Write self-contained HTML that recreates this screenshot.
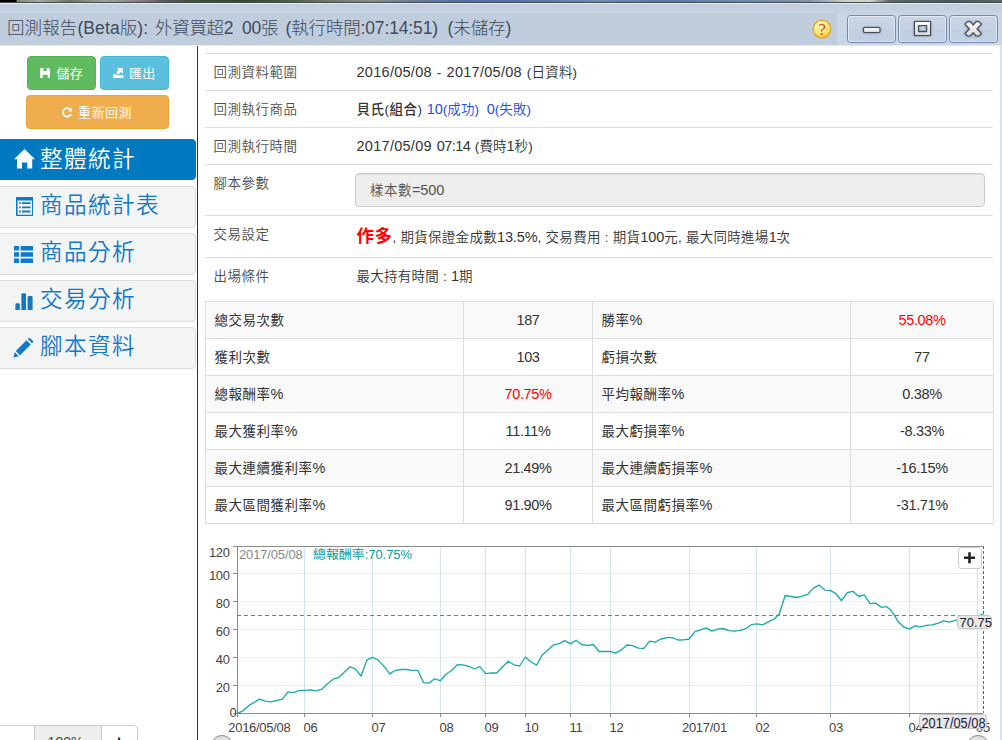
<!DOCTYPE html>
<html lang="zh-Hant">
<head>
<meta charset="utf-8">
<title>回測報告</title>
<style>
*{box-sizing:border-box}
html,body{margin:0;padding:0}
body{width:1002px;height:740px;overflow:hidden;background:#fff;position:relative;
 font-family:"Liberation Sans","Noto Sans CJK TC",sans-serif;font-size:14px;line-height:20px;color:#333}
.abs{position:absolute}
/* window chrome */
#deskimg{left:0;top:0;width:1002px;height:3px;border-bottom:1px solid #474a4c;background:
 linear-gradient(90deg,#000 0,#000 16px,#7f8a7c 17px,#a3aaa0 40px,#6c7868 70px,#9aa29a 105px,#8a7d8a 140px,#5a5560 165px,#3f5438 190px,#33482f 240px,#4a5d44 290px,#6d7a6c 330px,#858d86 370px,#6a7f9c 410px,#4f70a6 470px,#5878aa 540px,#6f8db4 600px,#587aa6 660px,#6a89ad 740px,#7d94ae 810px,#cfcfc6 845px,#d6d6cc 870px,#5a676c 890px,#48585e 950px,#56666a 1002px)}
#titlebar{left:0;top:3px;width:1002px;height:43px;background:#bfcddc;border-top:1px solid #e6edf6;border-bottom:1px solid #e2eaf3}
#titlebar .lite{left:0;top:0;width:1002px;height:9px;background:linear-gradient(#c0cedd,#c6d3e1)}
#titlebar .rlite{left:837px;top:9px;width:165px;height:32px;background:#c9d6e5}
#ttext{top:17px;height:26px;line-height:26px;font-size:17.5px;color:#3f4b5c;white-space:nowrap;font-weight:300}
#ttext span{position:absolute;top:0;white-space:nowrap}
.wbtn{top:15px;width:48px;height:28px;border:1px solid #7c8eb0;border-radius:3px;
 background:linear-gradient(#cfdbe9,#c3d1e2 45%,#bccbde 50%,#c7d4e4);box-shadow:inset 0 0 0 1px rgba(255,255,255,.45)}
#rstrip{left:1000px;top:46px;width:2px;height:694px;background:#d4e2f1}
/* sidebar */
#vline{left:197px;top:46px;width:1px;height:694px;background:#333}
.btn{position:absolute;height:34px;border-radius:4px;color:#fff;font-size:13px;line-height:33px;white-space:nowrap;font-weight:400}
.btn span{position:absolute;top:0}
.nav{position:absolute;left:-4px;width:200px;padding-left:3px;height:42px;border:1px solid #ddd;border-radius:4px;background:#f3f4f4;color:#1278c8;font-size:22.6px;letter-spacing:1.4px;line-height:38px;white-space:nowrap;font-weight:350}
.nav.act{background:#0079c1;border-color:#0079c1;color:#fff;height:41px;line-height:40px}
.nav span{position:absolute;left:43px;top:0}
.nav svg{position:absolute;margin-left:3px}
/* content */
table{border-collapse:collapse;border-spacing:0}
#info{left:205px;top:53px;width:788px}
#info td{font-weight:350;padding:9px 8px 7px;border-top:1px solid #ddd;vertical-align:top;line-height:20px;color:#333;font-size:13.5px;letter-spacing:.5px}
#info td.l{width:142px;padding-left:8.5px;color:#505050}
#info td.v{padding-left:9.5px}
#stat{left:205px;top:301px;width:788px;table-layout:fixed}
#stat td{font-weight:400;border:1px solid #ddd;padding:9px 8px 7px 8.5px;line-height:20px;height:37px;color:#333;font-size:13.5px;letter-spacing:.5px}
#stat td.n{font-weight:350;text-align:center;padding:8px;font-size:14.5px;letter-spacing:-.35px}
#stat tr:nth-child(odd) td{background:#f9f9f9}
.red{color:#f00!important}
.d{font-size:14.5px;line-height:1;letter-spacing:.28px}
.a{font-size:14.5px;line-height:1;letter-spacing:-.1px}
.inp{height:34px;border:1px solid #ccc;border-radius:4px;background:#eee;padding:7px 12px 5px;color:#555;line-height:20px;box-shadow:inset 0 1px 1px rgba(0,0,0,.075)}
</style>
</head>
<body>
<div id="deskimg" class="abs"></div>
<div id="titlebar" class="abs"><div class="abs lite"></div><div class="abs rlite"></div></div>
<div id="ttext" class="abs" style="left:0;top:15px">
<span style="left:7px;letter-spacing:0.1px">回測報告(Beta版):</span>
<span style="left:155px;letter-spacing:-0.3px">外資買超2</span>
<span style="left:242px;letter-spacing:-0.2px">00張</span>
<span style="left:285.5px;letter-spacing:-0.15px">(執行時間:07:14:51)</span>
<span style="left:447.5px;letter-spacing:-0.1px">(未儲存)</span>
</div>
<!--CHROME-START-->
<svg class="abs" style="left:810px;top:14px" width="192" height="32" viewBox="810 14 192 32">
<defs>
<radialGradient id="hg" cx="0.4" cy="0.3" r="0.8"><stop offset="0" stop-color="#fffbc8"/><stop offset="0.6" stop-color="#fce46a"/><stop offset="1" stop-color="#f5c22a"/></radialGradient>
<linearGradient id="bg1" x1="0" y1="0" x2="0" y2="1"><stop offset="0" stop-color="#cbd7e7"/><stop offset="0.5" stop-color="#c5d2e4"/><stop offset="0.55" stop-color="#c1cfe2"/><stop offset="1" stop-color="#c2d0e2"/></linearGradient>
<linearGradient id="gl" x1="0" y1="0" x2="0" y2="1"><stop offset="0" stop-color="#ffffff"/><stop offset="1" stop-color="#d8d8d8"/></linearGradient>
</defs>
<circle cx="822" cy="29" r="8.8" fill="url(#hg)" stroke="#e0a21a" stroke-width="1.2"/>
<text x="822.2" y="34.8" text-anchor="middle" font-family="Liberation Serif, serif" font-size="16.5" fill="#dc3c1a">?</text>
<g stroke="#7686ac" stroke-width="1" fill="url(#bg1)">
<rect x="847.5" y="15.5" width="48" height="27" rx="3"/>
<rect x="898.5" y="15.5" width="48" height="27" rx="3"/>
<rect x="949.5" y="15.5" width="48" height="27" rx="3"/>
</g>
<g stroke="rgba(255,255,255,0.45)" stroke-width="1" fill="none">
<rect x="848.5" y="16.5" width="46" height="25" rx="2"/>
<rect x="899.5" y="16.5" width="46" height="25" rx="2"/>
<rect x="950.5" y="16.5" width="46" height="25" rx="2"/>
</g>
<g fill="url(#gl)" stroke="#454c5c" stroke-width="1.15" stroke-linejoin="round" style="filter:drop-shadow(0 0.5px 0.8px rgba(40,45,60,.55))">
<rect x="863.5" y="27.5" width="16.5" height="5" rx="1.2"/>
<path fill-rule="evenodd" d="M914.5 21.5H930.5V35.5H914.5Z M918.5 25.5V31.6H926.7V25.5Z"/>
<path d="M965 24.2L967.8 21.6H970.2L973.2 25.2 976.2 21.6H978.6L981.4 24.2 977 29 981.4 33.6 978.6 36H976.2L973.2 32.6 970.2 36H967.8L965 33.6 969.4 29Z"/>
</g>
</svg>
<!--CHROME-END-->

<div id="rstrip" class="abs"></div>
<div id="vline" class="abs"></div>
<!--SIDEBAR-START-->
<div class="btn" style="left:27px;top:56px;width:69px;background:#60ba60;border:1px solid #58b458">
<svg class="abs" style="left:11.5px;top:11px" width="10.5" height="10.2" viewBox="0 0 11 11"><path fill="#fff" d="M0.6 0H3.6V3.2H7V0H9L11 1.8V10.4Q11 11 10.4 11H8.2V7.4H2.8V11H0.6Q0 11 0 10.4V0.6Q0 0 0.6 0Z"/></svg>
<span style="left:28.5px;letter-spacing:0.3px">儲存</span></div>
<div class="btn" style="left:100px;top:56px;width:69px;background:#5bc0de;border:1px solid #46b8da">
<svg class="abs" style="left:12px;top:11px" width="10.6" height="10.4" viewBox="0 0 11 11"><path fill="#fff" d="M0 7.6H11V11H0Z M0.6 6.4H3L4.4 7.6H0Z M4 0H10.2V6.2L8.2 4.2 5.6 6.8 3.4 4.6 6 2Z"/></svg>
<span style="left:28px;letter-spacing:0.3px">匯出</span></div>
<div class="btn" style="left:26px;top:95px;width:143px;background:#f0ad4e;border:1px solid #eea236">
<svg class="abs" style="left:34.5px;top:11px" width="10.6" height="10.6" viewBox="0 0 11 11"><path fill="none" stroke="#fff" stroke-width="1.8" d="M9.4 7.4A4.4 4.4 0 1 1 8.6 2.6"/><path fill="#fff" d="M10.8 0V4.6H6.2Z"/></svg>
<span style="left:51px;letter-spacing:0.5px">重新回測</span></div>

<div class="nav act" style="top:139px">
<svg style="left:14px;top:9px" width="21" height="19.5" viewBox="0 0 21 19.5"><path fill="#fff" d="M10.5 0L21 10.2H18.2V19.5H13.3V13.6H8V19.5H3V10.2H0Z"/></svg>
<span>整體統計</span></div>
<div class="nav" style="top:186px">
<svg style="left:15.5px;top:10px" width="17.6" height="19.4" viewBox="0 0 17.6 19.4"><path fill="#1278c8" fill-rule="evenodd" d="M0.6 0H17Q17.6 0 17.6 0.6V18.8Q17.6 19.4 17 19.4H0.6Q0 19.4 0 18.8V0.6Q0 0 0.6 0Z M1.6 3.4V17.8H16V3.4Z M3.2 5.2H4.8V7H3.2Z M6 5.2H14.6V7H6Z M3.2 9.4H4.8V11.2H3.2Z M6 9.4H14.6V11.2H6Z M3.2 13.6H4.8V15.4H3.2Z M6 13.6H14.6V15.4H6Z"/></svg>
<span>商品統計表</span></div>
<div class="nav" style="top:233px">
<svg style="left:14px;top:12px" width="19" height="17" viewBox="0 0 19 17"><path fill="#1278c8" d="M0 0H5V4.6H0Z M6.6 0H19V4.6H6.6Z M0 6.2H5V10.8H0Z M6.6 6.2H19V10.8H6.6Z M0 12.4H5V17H0Z M6.6 12.4H19V17H6.6Z"/></svg>
<span>商品分析</span></div>
<div class="nav" style="top:280px">
<svg style="left:15px;top:12px" width="18" height="17" viewBox="0 0 18 17"><path fill="#1278c8" d="M0.4 17V11.6Q0.4 10.2 1.8 10.2H3.4Q4.8 10.2 4.8 11.6V17Z M6.4 17V1.6Q6.4 0.2 7.8 0.2H9.6Q11 0.2 11 1.6V17Z M12.6 17V4.4Q12.6 3 14 3H16.2Q17.6 3 17.6 4.4V17Z"/></svg>
<span>交易分析</span></div>
<div class="nav" style="top:327px">
<svg style="left:13px;top:10px" width="21" height="20" viewBox="0 0 21 20"><path fill="#1278c8" d="M0.4 19.6L1.8 14.2 5.8 18.2Z M2.8 13L13.6 2.2 17.8 6.4 7 17.2Z M14.8 1L15.8 0.2Q16.6 -0.4 17.4 0.4L19.8 2.8Q20.4 3.6 19.8 4.4L19 5.2Z"/></svg>
<span>腳本資料</span></div>

<div class="abs" style="left:-6px;top:725px;width:144px;height:30px;border:1px solid #ccc;border-radius:4px;background:#fff"></div>
<div class="abs" style="left:34px;top:726px;width:68px;height:20px;background:#eee;border-left:1px solid #ccc;border-right:1px solid #ccc;text-align:center;font-size:14px;line-height:32px;color:#444;padding-right:5px">100%</div>
<div class="abs" style="left:112px;top:733px;width:14px;height:14px;font-size:18px;font-weight:bold;line-height:18px;color:#222;text-align:center">+</div>
<!--SIDEBAR-END-->
<!--INFO-START-->
<table id="info" class="abs">
<tr><td class="l">回測資料範圍</td><td class="v" style="word-spacing:.6px"><span class="d">2016/05/08</span> - <span class="d">2017/05/08</span> <span style="letter-spacing:.2px">(日資料)</span></td></tr>
<tr><td class="l">回測執行商品</td><td class="v"><b style="font-weight:500">貝氏(組合)</b> <span style="color:#1f4de6;letter-spacing:.1px"><span class="a">10</span>(成功)&nbsp; <span class="a">0</span>(失敗)</span></td></tr>
<tr><td class="l">回測執行時間</td><td class="v" style="word-spacing:0.5px"><span class="d">2017/05/09</span> <span style="letter-spacing:.1px"><span class="a" style="letter-spacing:-.5px">07:14</span> (費時<span class="a">1</span>秒)</span></td></tr>
<tr><td class="l">腳本參數</td><td class="v" style="padding:8px 8px 8px 8px"><div class="inp" style="padding-left:14px">樣本數<span class="a">=500</span></div></td></tr>
<tr><td class="l">交易設定</td><td class="v" style="padding:8px 8px 8px 9.5px"><div style="height:25px;line-height:25px;white-space:nowrap;letter-spacing:.27px"><b class="red" style="letter-spacing:.5px;font-size:17.5px;font-weight:bold;line-height:25px;vertical-align:baseline">作多</b>, 期貨保證金成數<span class="a">13.5%</span>, 交易費用 : 期貨<span class="a">100</span>元, 最大同時進場<span class="a">1</span>次</div></td></tr>
<tr><td class="l">出場條件</td><td class="v" style="letter-spacing:.25px">最大持有時間 : <span class="a">1</span>期</td></tr>
</table>

<table id="stat" class="abs">
<colgroup><col style="width:258px"><col style="width:129px"><col style="width:258px"><col style="width:143px"></colgroup>
<tr><td>總交易次數</td><td class="n">187</td><td>勝率<span class="a">%</span></td><td class="n red">55.08%</td></tr>
<tr><td>獲利次數</td><td class="n">103</td><td>虧損次數</td><td class="n">77</td></tr>
<tr><td>總報酬率<span class="a">%</span></td><td class="n red">70.75%</td><td>平均報酬率<span class="a">%</span></td><td class="n">0.38%</td></tr>
<tr><td>最大獲利率<span class="a">%</span></td><td class="n">11.11%</td><td>最大虧損率<span class="a">%</span></td><td class="n">-8.33%</td></tr>
<tr><td>最大連續獲利率<span class="a">%</span></td><td class="n">21.49%</td><td>最大連續虧損率<span class="a">%</span></td><td class="n">-16.15%</td></tr>
<tr><td>最大區間獲利率<span class="a">%</span></td><td class="n">91.90%</td><td>最大區間虧損率<span class="a">%</span></td><td class="n">-31.71%</td></tr>
</table>
<!--INFO-END-->

<!--CHART-START-->
<svg class="abs" style="left:0;top:0" width="1002" height="740" viewBox="0 0 1002 740" font-family="Liberation Sans, Noto Sans CJK TC, sans-serif" font-size="13">
<g stroke="#ececec" stroke-width="1" shape-rendering="crispEdges">
<path d="M237 573.5H983M237 601.5H983M237 629.5H983M237 657.5H983M237 685.5H983"/>
</g>
<g stroke="#d2e6f2" stroke-width="1" shape-rendering="crispEdges">
<path d="M304.5 546V713M372.5 546V713M440.5 546V713M485.5 546V713M525.5 546V713M570.5 546V713M610.5 546V713M689.5 546V713M756.5 546V713M830.5 546V713M909.5 546V713M977.5 546V713"/>
</g>
<g stroke="#8c8c8c" stroke-width="1" shape-rendering="crispEdges" fill="none">
<path d="M233 546.5H983"/>
<path d="M237.5 546V717"/>
<path d="M237 713.5H983"/>
<path d="M233 573.5H237M233 601.5H237M233 629.5H237M233 657.5H237M233 685.5H237M233 713.5H237"/>
<path d="M304.5 713V717M372.5 713V717M440.5 713V717M485.5 713V717M525.5 713V717M570.5 713V717M610.5 713V717M689.5 713V717M756.5 713V717M830.5 713V717M909.5 713V717M977.5 713V717"/>
</g>
<path d="M237 615.5H983" stroke="#6d7a9c" stroke-width="1" stroke-dasharray="4 3" shape-rendering="crispEdges"/>
<path d="M983.5 546V713" stroke="#5a6180" stroke-width="1" stroke-dasharray="3 2" shape-rendering="crispEdges"/>
<polyline fill="none" stroke="#1ca9ab" stroke-width="1.35" stroke-linejoin="round" points="237.6,713.4 243.0,710.8 249.0,705.4 259.5,699.2 265.5,701.2 270.9,701.8 276.3,700.6 282.3,699.2 287.9,691.8 293.5,692.6 299.5,690.4 304.9,690.4 310.4,689.8 316.2,690.8 321.8,689.2 327.4,683.8 333.2,679.2 338.8,677.4 344.4,671.9 350.0,666.9 355.3,668.9 361.1,676.0 366.9,659.9 372.3,657.3 377.9,659.9 383.7,665.9 389.7,673.9 395.3,670.3 401.3,669.5 406.6,669.5 412.2,670.3 417.8,670.3 423.4,682.4 423.6,682.6 429.0,683.2 434.6,678.8 440.4,680.6 445.9,674.2 451.9,670.2 457.5,664.6 462.9,664.8 468.9,666.4 474.5,669.0 479.9,666.6 485.5,673.6 491.3,672.8 496.8,673.0 502.6,666.8 508.4,661.2 514.0,664.8 519.6,666.0 525.4,657.0 531.0,662.0 536.6,665.2 542.2,654.9 547.9,649.9 553.5,644.9 559.1,643.7 564.7,640.7 570.5,643.9 576.1,640.3 582.1,644.7 587.7,645.5 593.3,644.5 599.0,651.5 604.6,651.5 610.2,651.3 615.4,653.2 621.0,650.2 627.0,645.0 632.6,645.6 638.3,648.2 643.9,648.4 649.5,641.2 655.3,642.2 660.9,639.0 666.9,637.6 672.3,637.6 678.1,640.0 683.7,639.8 689.2,639.0 695.0,631.7 700.6,629.9 706.2,627.9 711.8,631.1 717.8,629.1 723.2,628.5 728.8,630.7 734.4,631.1 740.1,630.3 745.7,628.7 751.3,624.7 757.1,623.9 762.7,624.9 768.3,621.9 774.1,619.1 779.1,614.3 785.2,595.5 790.8,596.5 796.6,597.5 802.2,596.1 807.8,594.3 813.4,588.1 819.0,585.1 824.8,590.1 830.3,590.3 835.5,593.3 841.5,600.7 847.5,592.5 852.9,591.3 858.7,596.5 864.3,594.9 870.1,603.7 875.5,603.1 881.4,607.3 886.8,606.7 890.8,610.3 894.2,614.9 898.2,621.8 903.8,627.0 909.4,629.2 915.2,625.8 920.8,626.8 926.4,625.4 932.1,624.8 937.7,623.4 943.7,620.8 949.1,622.2 954.7,620.6 957.7,619.8 965.7,618.2 971.7,617.4 977.6,615.8 983.2,614.3"/>
<g fill="#444" text-anchor="end" letter-spacing="-0.35">
<text x="229.6" y="557.3">120</text><text x="229.6" y="580">100</text><text x="229.6" y="608">80</text><text x="229.6" y="636">60</text><text x="229.6" y="664">40</text><text x="229.6" y="692">20</text><text x="236.3" y="716.5">0</text>
</g>
<g fill="#444" letter-spacing="-0.3">
<text x="228.3" y="732">2016/05/08</text><text x="303.5" y="732">06</text><text x="371.5" y="732">07</text><text x="439.5" y="732">08</text><text x="484.5" y="732">09</text><text x="524.5" y="732">10</text><text x="569.5" y="732">11</text><text x="609.5" y="732">12</text><text x="682" y="732">2017/01</text><text x="755.5" y="732">02</text><text x="829" y="732">03</text><text x="908.5" y="732">04</text><text x="976" y="732">05</text>
</g>
<text x="239" y="559" fill="#8a8a8a" letter-spacing="-0.15">2017/05/08</text>
<text x="313" y="559" fill="#0a9a9c" font-size="12" textLength="99" lengthAdjust="spacingAndGlyphs">總報酬率:70.75%</text>
<rect x="958.5" y="547.5" width="23" height="21" rx="3" fill="#fff" stroke="#ccc"/>
<path d="M964 556.5H975V559H964Z M968.2 552.3H970.8V563.2H968.2Z" fill="#222"/>
<rect x="957.5" y="615.5" width="34" height="13" rx="3" fill="#e8e8e8" stroke="#c4c4c4"/>
<text x="959.5" y="627" fill="#222">70.75</text>
<rect x="919.5" y="714.5" width="67" height="14" rx="3" fill="#e8e8e8" stroke="#c4c4c4"/>
<text x="921.5" y="727.6" fill="#1a1a3a" font-size="14" textLength="64" lengthAdjust="spacingAndGlyphs">2017/05/08</text>
<circle cx="222" cy="746" r="10.5" fill="#e2e2e2" stroke="#8a8a8a"/>
<circle cx="978" cy="746" r="10.5" fill="#e2e2e2" stroke="#8a8a8a"/>
</svg>
<!--CHART-END-->
</body>
</html>
